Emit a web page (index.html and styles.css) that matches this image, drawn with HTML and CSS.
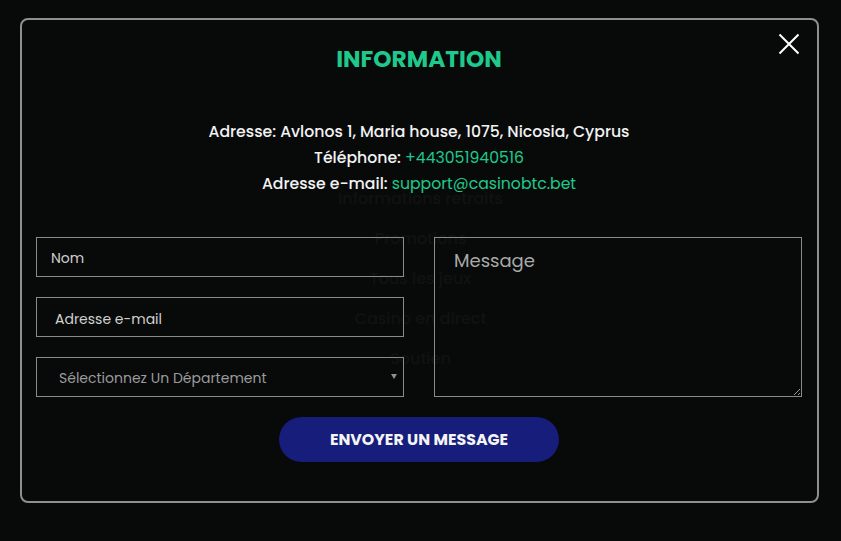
FILE: index.html
```html
<!DOCTYPE html>
<html lang="fr">
<head>
<meta charset="utf-8">
<title>Information</title>
<link rel="stylesheet" href="styles.css">
</head>
<body>
<div class="page">
  <nav class="footer-links">
    <a>Informations retraits</a>
    <a>Promotions</a>
    <a>Tous les jeux</a>
    <a>Casino en direct</a>
    <a>Soutien</a>
  </nav>
</div>
<div class="modal">
  <button class="close" aria-label="Fermer">
    <svg width="22" height="22" viewBox="0 0 22 22"><path d="M1.5 1.5 L20.5 20.5 M20.5 1.5 L1.5 20.5" stroke="#fff" stroke-width="2" fill="none"/></svg>
  </button>
  <h2 class="title">INFORMATION</h2>
  <div class="info">
    <p>Adresse: Avlonos 1, Maria house, 1075, Nicosia, Cyprus</p>
    <p>Téléphone: <span class="hl">+443051940516</span></p>
    <p>Adresse e-mail: <span class="hl">support@casinobtc.bet</span></p>
  </div>
  <form class="form">
    <div class="col">
      <input class="field f-name" type="text" placeholder="Nom">
      <input class="field f-mail" type="email" placeholder="Adresse e-mail">
      <div class="select-wrap">
        <select class="field f-select">
          <option>Sélectionnez Un Département</option>
        </select>
      </div>
    </div>
    <textarea class="field f-msg" placeholder="Message"></textarea>
  </form>
  <div class="actions">
    <button class="send" type="button">ENVOYER UN MESSAGE</button>
  </div>
</div>
</body>
</html>
```
FILE: styles.css
```css
* { box-sizing: border-box; }
html, body { margin: 0; padding: 0; }
body {
  background: #080a0a;
  font-family: "Poppins", "Inter", "Open Sans", sans-serif;
  width: 841px;
  height: 541px;
  overflow: hidden;
  position: relative;
}
.page { position: absolute; inset: 0; }
.footer-links {
  display: flex;
  flex-direction: column;
  align-items: center;
  padding-top: 186px;
  gap: 14px;
}
.footer-links a {
  color: #101212;
  font-size: 16px;
  line-height: 26px;
  font-weight: 500;
}
.modal {
  position: absolute;
  left: 20px;
  top: 18px;
  width: 799px;
  height: 485px;
  border: 2px solid #8f8f8f;
  border-radius: 8px;
  padding: 23px 15px 0 14px;
  background: transparent;
}
.close {
  position: absolute;
  top: 13px;
  right: 17px;
  background: none;
  border: 0;
  padding: 0;
  width: 22px;
  height: 22px;
  cursor: pointer;
}
.close svg { display: block; }
.title {
  margin: 0;
  text-align: center;
  color: #1fc98b;
  font-size: 23.3px;
  line-height: 30px;
  font-weight: 700;
  letter-spacing: 0;
  position: relative;
  top: 1px;
}
.info {
  margin-top: 46px;
  text-align: center;
  color: #f2f2f2;
  font-size: 15.7px;
  line-height: 26px;
  font-weight: 500;
}
.info p { margin: 0; }
.info .hl { color: #1fc98b; font-weight: 400; }
.form {
  margin-top: 40px;
  display: grid;
  grid-template-columns: 368px 368px;
  column-gap: 30px;
}
.col {
  display: flex;
  flex-direction: column;
  gap: 20px;
}
.field {
  display: block;
  width: 100%;
  height: 40px;
  background: transparent;
  border: 1px solid #8a8a8a;
  border-radius: 0;
  color: #ddd;
  font-family: inherit;
  outline: none;
}
.field::placeholder { color: #d0d0d0; }
.f-name { padding: 3px 0 0 14px; font-size: 14px; }
.f-mail { padding: 4px 0 0 18px; font-size: 14px; }
.select-wrap { position: relative; }
.select-wrap::after {
  content: "";
  position: absolute;
  right: 7px;
  top: 17px;
  border-left: 3px solid transparent;
  border-right: 3px solid transparent;
  border-top: 5px solid #8f8f8f;
}
.f-select {
  appearance: none;
  -webkit-appearance: none;
  padding: 1px 0 0 22px;
  font-size: 14px;
  color: #9b9b9b;
}
.f-select option { background: #080a0a; }
.f-msg {
  height: 160px;
  padding: 9px 19px;
  font-size: 18px;
  resize: both;
}
.f-msg::placeholder { color: #a9a9a9; }
.actions {
  margin-top: 20px;
  display: flex;
  justify-content: center;
}
.send {
  width: 280px;
  height: 45px;
  border: 0;
  border-radius: 23px;
  background: #161d7a;
  color: #f4f4f4;
  font-family: inherit;
  font-size: 15.8px;
  font-weight: 700;
  cursor: pointer;
}
```
